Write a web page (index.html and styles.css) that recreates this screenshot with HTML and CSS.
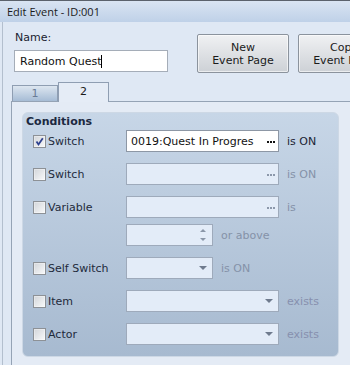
FILE: index.html
```html
<!doctype html>
<html lang="en">
  <head>
    <meta charset="UTF-8" />
    <title>Edit Event - ID:001</title>
    <link rel="stylesheet" href="styles.css">
  </head>
  <body>
    <div class="titlebar">Edit Event - ID:001</div>

    <div class="frame">
      <div class="header">
        <div class="name-block">
          <label class="name-label">Name:</label>
          <div class="name-input">Random Quest<span class="caret"></span></div>
        </div>
        <div class="actions">
          <button class="btn">New<br />Event Page</button>
          <button class="btn">Copy<br />Event Page</button>
        </div>
      </div>

      <div class="tabs">
        <div class="tab">1</div>
        <div class="tab active">2</div>
      </div>

      <div class="tab-page">
        <div class="group">
          <div class="group-title">Conditions</div>

          <div class="cond-row first">
            <div class="cond-label">
              <span class="check checked">
                <svg width="11" height="11" viewBox="0 0 11 11"><path d="M2.5 5.5 L4.5 8.5 L8.8 2.2" fill="none" stroke="#2f428f" stroke-width="1.8" /></svg>
              </span>
              Switch
            </div>
            <div class="field">0019:Quest In Progres<span class="dots"></span></div>
            <span class="suffix">is ON</span>
          </div>

          <div class="cond-row">
            <div class="cond-label"><span class="check"></span>Switch</div>
            <div class="field off"><span></span><span class="dots"></span></div>
            <span class="suffix off">is ON</span>
          </div>

          <div class="cond-row">
            <div class="cond-label"><span class="check"></span>Variable</div>
            <div class="field off"><span></span><span class="dots"></span></div>
            <span class="suffix off">is</span>
          </div>

          <div class="cond-row spin-row">
            <div class="cond-label"></div>
            <div class="field off short">
              <span></span>
              <span class="spinner"><i class="up"></i><i class="down"></i></span>
            </div>
            <span class="suffix off">or above</span>
          </div>

          <div class="cond-row">
            <div class="cond-label"><span class="check"></span>Self Switch</div>
            <div class="field off short"><span></span><span class="arrow"></span></div>
            <span class="suffix off">is ON</span>
          </div>

          <div class="cond-row">
            <div class="cond-label"><span class="check"></span>Item</div>
            <div class="field off"><span></span><span class="arrow"></span></div>
            <span class="suffix off exists">exists</span>
          </div>

          <div class="cond-row">
            <div class="cond-label"><span class="check"></span>Actor</div>
            <div class="field off"><span></span><span class="arrow"></span></div>
            <span class="suffix off exists">exists</span>
          </div>
        </div>
      </div>
    </div>
  </body>
</html>
```

FILE: styles.css
```css
body {
  margin: 0;
  width: 350px;
  height: 365px;
  overflow: hidden;
  background: #dfe8f4;
  font-family: "DejaVu Sans", Verdana, sans-serif;
  font-size: 11px;
  color: #1c2433;
}

/* Window chrome */
.titlebar {
  height: 22px;
  box-sizing: border-box;
  padding-left: 7px;
  display: flex;
  align-items: center;
  border-top: 1px solid #5b626c;
  background: linear-gradient(#d9e4f2, #bfd1e8);
  font-family: "Open Sans", sans-serif;
  font-size: 11px;
  color: #1a1a1a;
}

.frame {
  margin-left: 2px;
  border-left: 1px solid #b3bfce;
  height: 343px;
}

/* Header: name + page buttons */
.header {
  display: flex;
  padding: 8px 0 0 11px;
}

.name-block {
  width: 154px;
  flex: none;
}

.name-label {
  display: block;
  line-height: 16px;
  padding-left: 1px;
  margin-bottom: 4px;
  color: #1a2230;
}

.name-input {
  height: 22px;
  box-sizing: border-box;
  border: 1px solid #a5adb8;
  background: #fff;
  padding-left: 5px;
  display: flex;
  align-items: center;
  color: #111;
}

.caret {
  width: 1px;
  height: 13px;
  background: #000;
}

.actions {
  display: flex;
  gap: 9px;
  margin: 4px 0 0 29px;
}

.btn {
  flex: none;
  width: 92px;
  height: 39px;
  padding: 0;
  border: 1px solid #8b939d;
  border-radius: 2px;
  background: linear-gradient(#f0f1f3, #cdd1d6);
  box-shadow: inset 0 0 0 1px rgba(255, 255, 255, 0.6);
  font-family: inherit;
  font-size: 11px;
  line-height: 13px;
  color: #1a1a1a;
}

/* Tabs */
.tabs {
  display: flex;
  align-items: flex-end;
  height: 19px;
  margin-top: 9px;
  padding-left: 9px;
}

.tab {
  width: 46px;
  height: 16px;
  box-sizing: border-box;
  border: 1px solid #8f9eb2;
  border-bottom: none;
  background: linear-gradient(#dde6f0, #a6bcd5);
  text-align: center;
  line-height: 16px;
  color: #6a7c95;
}

.tab.active {
  width: 51px;
  height: 20px;
  margin-bottom: -1px;
  position: relative;
  z-index: 1;
  background: #e5ecf6;
  line-height: 18px;
  color: #1a1a1a;
}

.tab-page {
  margin-left: 8px;
  border: 1px solid #95a3b5;
  border-right: none;
  background: #e4ebf5;
  padding: 10px 0 0 10px;
  height: 300px;
}

/* Conditions group */
.group {
  width: 317px;
  height: 245px;
  box-sizing: border-box;
  border: 1px solid #cdd8e5;
  border-radius: 6px;
  background: linear-gradient(#c7d6e7, #a7bad0);
  padding: 2px 0 0 3px;
}

.group-title {
  font-weight: bold;
  line-height: 14px;
  color: #1b2840;
}

.cond-row {
  display: flex;
  align-items: center;
  height: 22px;
  margin-top: 11px;
  padding-left: 7px;
}

.cond-row.first {
  margin-top: 1px;
}

.cond-row.spin-row {
  margin-top: 6px;
}

.cond-label {
  flex: none;
  width: 93px;
  display: flex;
  align-items: center;
  gap: 2px;
  color: #1e2a3b;
}

.check {
  flex: none;
  width: 13px;
  height: 13px;
  box-sizing: border-box;
  border: 1px solid #8d9196;
  background: linear-gradient(135deg, #d2d5d9, #f8f9fa);
  box-shadow: inset 0 0 0 1px rgba(255, 255, 255, 0.35);
  display: flex;
}

.field {
  flex: none;
  width: 153px;
  height: 22px;
  box-sizing: border-box;
  border: 1px solid #8d97a5;
  background: #fff;
  display: flex;
  align-items: center;
  justify-content: space-between;
  padding: 0 3px 0 4px;
  color: #111;
  white-space: nowrap;
}

.field.off {
  background: #e3ecf8;
  border-color: #9eaabb;
  color: #8c98ab;
}

.field.short {
  width: 87px;
}

.dots {
  width: 8px;
  height: 2px;
  margin-top: 1px;
  background: repeating-linear-gradient(90deg, currentColor 0 2px, transparent 2px 3px);
}

.arrow {
  width: 0;
  height: 0;
  margin-right: 2px;
  border-left: 4px solid transparent;
  border-right: 4px solid transparent;
  border-top: 4px solid #6f7b8e;
}

.spinner {
  display: flex;
  flex-direction: column;
  gap: 6px;
  margin-right: 3px;
}

.spinner i {
  width: 0;
  height: 0;
  border-left: 3px solid transparent;
  border-right: 3px solid transparent;
}

.spinner .up {
  border-bottom: 3px solid #8a96a8;
}

.spinner .down {
  border-top: 3px solid #8a96a8;
}

.suffix {
  margin-left: 8px;
  color: #1c2433;
}

.suffix.off {
  color: #8592a8;
}

.suffix.exists {
  color: #8790ae;
}
```
